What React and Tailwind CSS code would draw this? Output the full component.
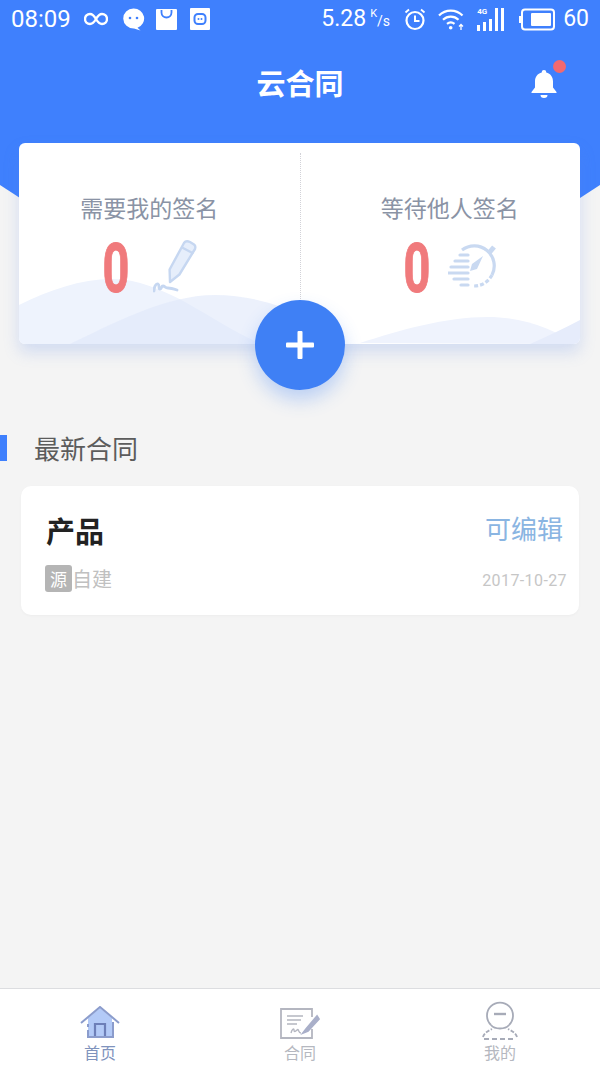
import React from 'react';

const cjk = { fontFamily: '"Noto Sans CJK SC", sans-serif' };

const Infinity8 = () => (
    <svg width="24" height="14" viewBox="0 0 24 14" fill="none" stroke="white" strokeWidth="2.4">
        <path d="M12 7C10 3.500 8.500 2 6 2a5 5 0 0 0 0 10c2.500 0 4-1.500 6-5s3.500-5 6-5a5 5 0 0 1 0 10c-2.500 0-4-1.500-6-5z" />
    </svg>
);

const ChatBubble = () => (
    <svg width="23" height="23" viewBox="0 0 23 23">
        <path d="M11.500 0.500a10.500 10 0 0 1 4 19.300l3 2.700-6.500-2a10.500 10 0 0 1-.5-20z" fill="white" />
        <circle cx="8" cy="10" r="1.300" fill="#3f80fd" />
        <circle cx="15" cy="10" r="1.300" fill="#3f80fd" />
    </svg>
);

const Bag = () => (
    <svg width="21" height="21" viewBox="0 0 21 21">
        <rect width="21" height="21" rx="1" fill="white" />
        <path d="M5.500 1v2.500a5 5 0 0 0 10 0V1" fill="none" stroke="#3f80fd" strokeWidth="1.800" />
    </svg>
);

const RobotBadge = () => (
    <svg width="20" height="22" viewBox="0 0 20 22">
        <rect width="20" height="22" rx="1" fill="white" />
        <rect x="4.500" y="6" width="11" height="10" rx="3.500" fill="none" stroke="#3f80fd" strokeWidth="2" />
        <circle cx="8.500" cy="11" r="1" fill="#3f80fd" />
        <circle cx="11.500" cy="11" r="1" fill="#3f80fd" />
    </svg>
);

const Alarm = () => (
    <svg width="22" height="23" viewBox="0 0 22 23" fill="none" stroke="white">
        <circle cx="11" cy="12.500" r="8.500" strokeWidth="2.200" />
        <path d="M11 7.500v5.500h4.500" strokeWidth="2" />
        <path d="M1.500 4.500 5 1.500M20.500 4.500 17 1.500" strokeWidth="1.800" />
    </svg>
);

const Wifi = () => (
    <svg width="27" height="23" viewBox="0 0 27 23" fill="none" stroke="white" strokeWidth="2.200">
        <path d="M1 7.500c6.500-6.500 17-6.500 23.500 0" />
        <path d="M5 11.800c4.500-4.200 11-4.200 15.500 0" />
        <path d="M9 15.800c2.500-2 5-2 7.500 0" />
        <circle cx="12.700" cy="19.800" r="1.800" fill="white" stroke="none" />
        <path d="M23 22v-5.500M21 18.500l2-2 2 2" strokeWidth="1.300" />
    </svg>
);

const Signal = () => (
    <div className="relative w-[30px] h-[23px]">
        <span className="absolute left-0 top-[-1px] text-[8px] leading-[10px] text-white font-bold" style={{ fontFamily: 'Roboto, sans-serif' }}>4G</span>
        <div className="flex items-end gap-[3px] h-full">
            <span className="w-[3px] h-[6px] bg-white" />
            <span className="w-[3px] h-[9px] bg-white" />
            <span className="w-[3px] h-[12px] bg-white" />
            <span className="w-[3px] h-[23px] bg-white" />
            <span className="w-[3px] h-[23px] bg-white" />
        </div>
    </div>
);

const Battery = () => (
    <svg width="36" height="23" viewBox="0 0 36 23">
        <rect x="3" y="1.500" width="32" height="20" rx="3" fill="none" stroke="white" strokeWidth="2" />
        <rect x="0" y="8" width="2" height="7" fill="white" />
        <rect x="12" y="5" width="20" height="13" rx="1" fill="white" />
    </svg>
);

const StatusBar = () => (
    <div className="h-[38px] flex items-center justify-between pl-[11px] pr-[11px] text-white" style={{ fontFamily: 'Roboto, sans-serif' }}>
        <div className="flex items-center">
            <span className="text-[24px] w-[73px]">08:09</span>
            <Infinity8 />
            <div className="flex items-center ml-[14px]">
                <ChatBubble />
                <span className="ml-[11px]"><Bag /></span>
                <span className="ml-[13px]"><RobotBadge /></span>
            </div>
        </div>
        <div className="flex items-center">
            <span className="text-[23px]">5.28</span>
            <span className="ml-[4px] mr-[13px] w-[21px] h-[22px] leading-none">
                <span className="text-[11px] align-top">K</span>
                <span className="text-[14px] relative top-[5px]">/s</span>
            </span>
            <Alarm />
            <div className="flex items-center gap-[12px] ml-[12px]">
                <Wifi />
                <Signal />
                <Battery />
            </div>
            <span className="text-[23px] ml-[8px]">60</span>
        </div>
    </div>
);

const Bell = () => (
    <div className="absolute right-[43px] top-[32px] w-[26px] h-[28px]">
        <svg width="26" height="28" viewBox="0 0 26 28" fill="white">
            <path d="M13 0a2.200 2.200 0 0 1 2.200 2.500c4.300 1 6.800 4.500 6.800 9v6l3.500 4.500v1H.5v-1L4 17.500v-6c0-4.500 2.500-8 6.800-9A2.200 2.200 0 0 1 13 0z" />
            <path d="M9.500 25h7a3.500 3 0 0 1-7 0z" />
        </svg>
        <span className="absolute left-[22px] top-[-10px] w-[13px] h-[13px] rounded-full bg-[#f2696f]" />
    </div>
);

const Waves = () => (
    <svg className="absolute inset-0" width="561" height="201" viewBox="19 143 561 201">
        <path d="M19 305C50 290 80 279 112 279C165 279 215 325 262 344H19Z" fill="#eef3fd" />
        <path d="M70 344C110 325 165 295 215 295C250 295 280 305 310 318V344Z" fill="#dfe8fa" fillOpacity="0.6" />
        <path d="M360 343C400 330 445 317 488 317C525 317 555 330 575 344Z" fill="#eff3fd" />
        <path d="M530 344C548 336 565 328 580 320V344Z" fill="#e6ecfb" />
    </svg>
);

const Pen = () => (
    <svg width="44" height="54" viewBox="0 0 44 54" fill="none" stroke="#c6d7f1" strokeWidth="2.400" strokeLinejoin="round" strokeLinecap="round">
        <path d="M17 43 16.600 30.500 31 4Q33 1 37 3L41 5.500Q43 7 42 10L26.400 35.500Z" fill="#e6eefb" />
        <path d="M30 9l9.500 5" />
        <path d="M1 52c0-4 2-8 4-7s0 5 2 5 1-3 3-3 2 2 5 2 6 1 9 2" strokeWidth="2.800" />
    </svg>
);

const Stopwatch = () => (
    <svg width="50" height="48" viewBox="0 0 50 48" fill="none" stroke="#c9d9f1" strokeWidth="3.200">
        <path d="M14 7A20 20 0 0 1 44 32" />
        <path d="M44 32A20 20 0 0 1 26 43" strokeDasharray="4 2" />
        <path d="M41 10l5-6" strokeWidth="5" />
        <path d="M12 12h8M7 18h13M3 24h17M0 30h20M6 36h14M13 42h7" strokeLinecap="round" />
        <path d="M35 13 24 21l-2 7 7-2z" fill="#c9d9f1" stroke="none" />
    </svg>
);

const Counter = ({ label, icon, className, iconClass }) => (
    <div className={`flex-1 flex flex-col items-center pt-[47px] ${className}`}>
        <div className="text-[23px] leading-[34px] text-[#8a93a5]" style={cjk}>{label}</div>
        <div className="flex items-center w-[138px] h-[64px] mt-[13px]">
            <span className="w-[46px] ml-[13px] text-center text-[69px] leading-[64px] font-bold text-[#f07a7c] scale-x-[0.68] [-webkit-text-stroke:1px_#f07a7c]" style={{ fontFamily: 'Roboto, sans-serif' }}>0</span>
            <span className={iconClass}>{icon}</span>
        </div>
    </div>
);

const SummaryCard = () => (
    <div className="relative mx-[19px] w-[561px] h-[201px]">
        <div className="relative h-full rounded-[6px] bg-white overflow-hidden shadow-[0_8px_16px_rgba(86,130,230,0.22)]">
            <Waves />
            <div className="relative flex h-full">
                <Counter label="需要我的签名" icon={<Pen />} className="pr-[20px]" iconClass="ml-[14px] mt-[-6px]" />
                <div className="w-0 h-[150px] mt-[10px] border-l border-dotted border-[#d2d2d8]" />
                <Counter label="等待他人签名" icon={<Stopwatch />} className="pl-[19px]" iconClass="ml-[8px] mt-[-4px]" />
            </div>
        </div>
        <button className="absolute left-[236px] top-[157px] w-[90px] h-[90px] rounded-full bg-[#3f80f5] flex items-center justify-center shadow-[0_10px_18px_rgba(63,128,245,0.3)]">
            <svg width="30" height="30" viewBox="0 0 30 30" fill="white">
                <rect x="12.500" y="1" width="5" height="28" rx="1" />
                <rect x="1" y="12.500" width="28" height="5" rx="1" />
            </svg>
        </button>
    </div>
);

const ContractCard = () => (
    <div className="mx-[21px] mt-[25px] h-[129px] rounded-[10px] bg-white pl-[24px] pr-[25px] pt-[25px] shadow-[0_1px_3px_rgba(0,0,0,0.03)]" style={cjk}>
        <div className="flex items-center justify-between h-[42px]">
            <span className="ml-[1px] mt-[-2px] text-[29px] font-bold text-[#222]">产品</span>
            <span className="text-[26px] text-[#8ab5e2] mr-[-9px] mt-[-9px]">可编辑</span>
        </div>
        <div className="flex items-center justify-between mt-[12px] h-[27px]">
            <div className="flex items-center">
                <span className="w-[27px] h-[27px] rounded-[3px] bg-[#b5b5b5] text-white text-[17px] leading-[27px] text-center">源</span>
                <span className="text-[20px] text-[#c0c0c0]">自建</span>
            </div>
            <span className="text-[16px] text-[#c6c6c6] mr-[-13px] mt-[4px] tracking-[0.4px]" style={{ fontFamily: 'Roboto, sans-serif' }}>2017-10-27</span>
        </div>
    </div>
);

const HomeIcon = () => (
    <svg width="40" height="34" viewBox="0 0 40 34" fill="none">
        <path d="M8 12 20 2l12 10v19H8z" fill="#b3caf7" />
        <path d="M1 17 20 1l19 16" stroke="#8b9ccc" strokeWidth="2" />
        <path d="M8 18v3M8 24v7h25V16" stroke="#8b9ccc" strokeWidth="2" />
        <path d="M15 30V18h10v12" stroke="#6d7fb8" strokeWidth="2.200" />
    </svg>
);

const ContractIcon = () => (
    <svg width="40" height="32" viewBox="0 0 40 32" fill="none" stroke="#b4b6c0" strokeWidth="1.800">
        <path d="M32 9V1H1v29h31v-9" />
        <path d="M7 8h16M7 12h14M7 16h10" strokeWidth="1.400" />
        <path d="M11 25c1-4 3-5 3-3s1 2 3 0 1 3 4 3" strokeWidth="1.400" />
        <path d="M37 8 26 21l-3 4 5-2 11-12z" fill="#a9afc9" stroke="#a9afc9" />
    </svg>
);

const MeIcon = () => (
    <svg width="36" height="42" viewBox="0 0 36 42" fill="none" stroke="#a7abb8" strokeWidth="1.800">
        <path d="M9 27A13 13 0 1 1 27 27" />
        <path d="M9 27c2 2.500 6 3.500 9 3.500s7-1 9-3.500" />
        <path d="M12 16h12" strokeWidth="2.400" />
        <path d="M1 39c1-4 5-6 9-8M35 39c-1-4-5-6-9-8" strokeDasharray="4 1.500" />
        <path d="M2 41h32" strokeDasharray="5 3" />
    </svg>
);

const Tab = ({ icon, label, active }) => (
    <div className="flex flex-col items-center">
        <div className="h-[42px] flex items-end justify-center">{icon}</div>
        <span className={`text-[16px] leading-[22px] mt-[1px] ${active ? 'text-[#7f93bd]' : 'text-[#b5b8c0]'}`} style={cjk}>{label}</span>
    </div>
);

export default function App() {
    return (
        <div className="relative w-[600px] h-[1066px] flex flex-col bg-[#f4f4f4] overflow-hidden">
            {/* blue header, its corners run on behind the card */}
            <div className="absolute inset-x-0 top-0 h-[198px] bg-[#3f80fd] [clip-path:polygon(0_0,100%_0,100%_185px,580px_198px,20px_198px,0_185px)]" />
            <div className="relative">
                <StatusBar />
                <div className="relative h-[92px] flex items-start justify-center pt-[23px]">
                    <span className="text-[29px] leading-[42px] font-bold text-white" style={cjk}>云合同</span>
                    <Bell />
                </div>
                <div className="h-[13px]" />
                <SummaryCard />
            </div>

            <div className="flex items-center mt-[91px]">
                <span className="w-[7px] h-[26px] bg-[#3f80fd]" />
                <span className="ml-[27px] text-[26px] leading-[26px] text-[#5c5c5c]" style={cjk}>最新合同</span>
            </div>
            <ContractCard />

            <div className="mt-auto h-[78px] bg-white border-t border-[#dcdde0] grid grid-cols-3 pt-[9px]">
                <Tab icon={<HomeIcon />} label="首页" active />
                <Tab icon={<ContractIcon />} label="合同" />
                <Tab icon={<MeIcon />} label="我的" />
            </div>
        </div>
    );
}
